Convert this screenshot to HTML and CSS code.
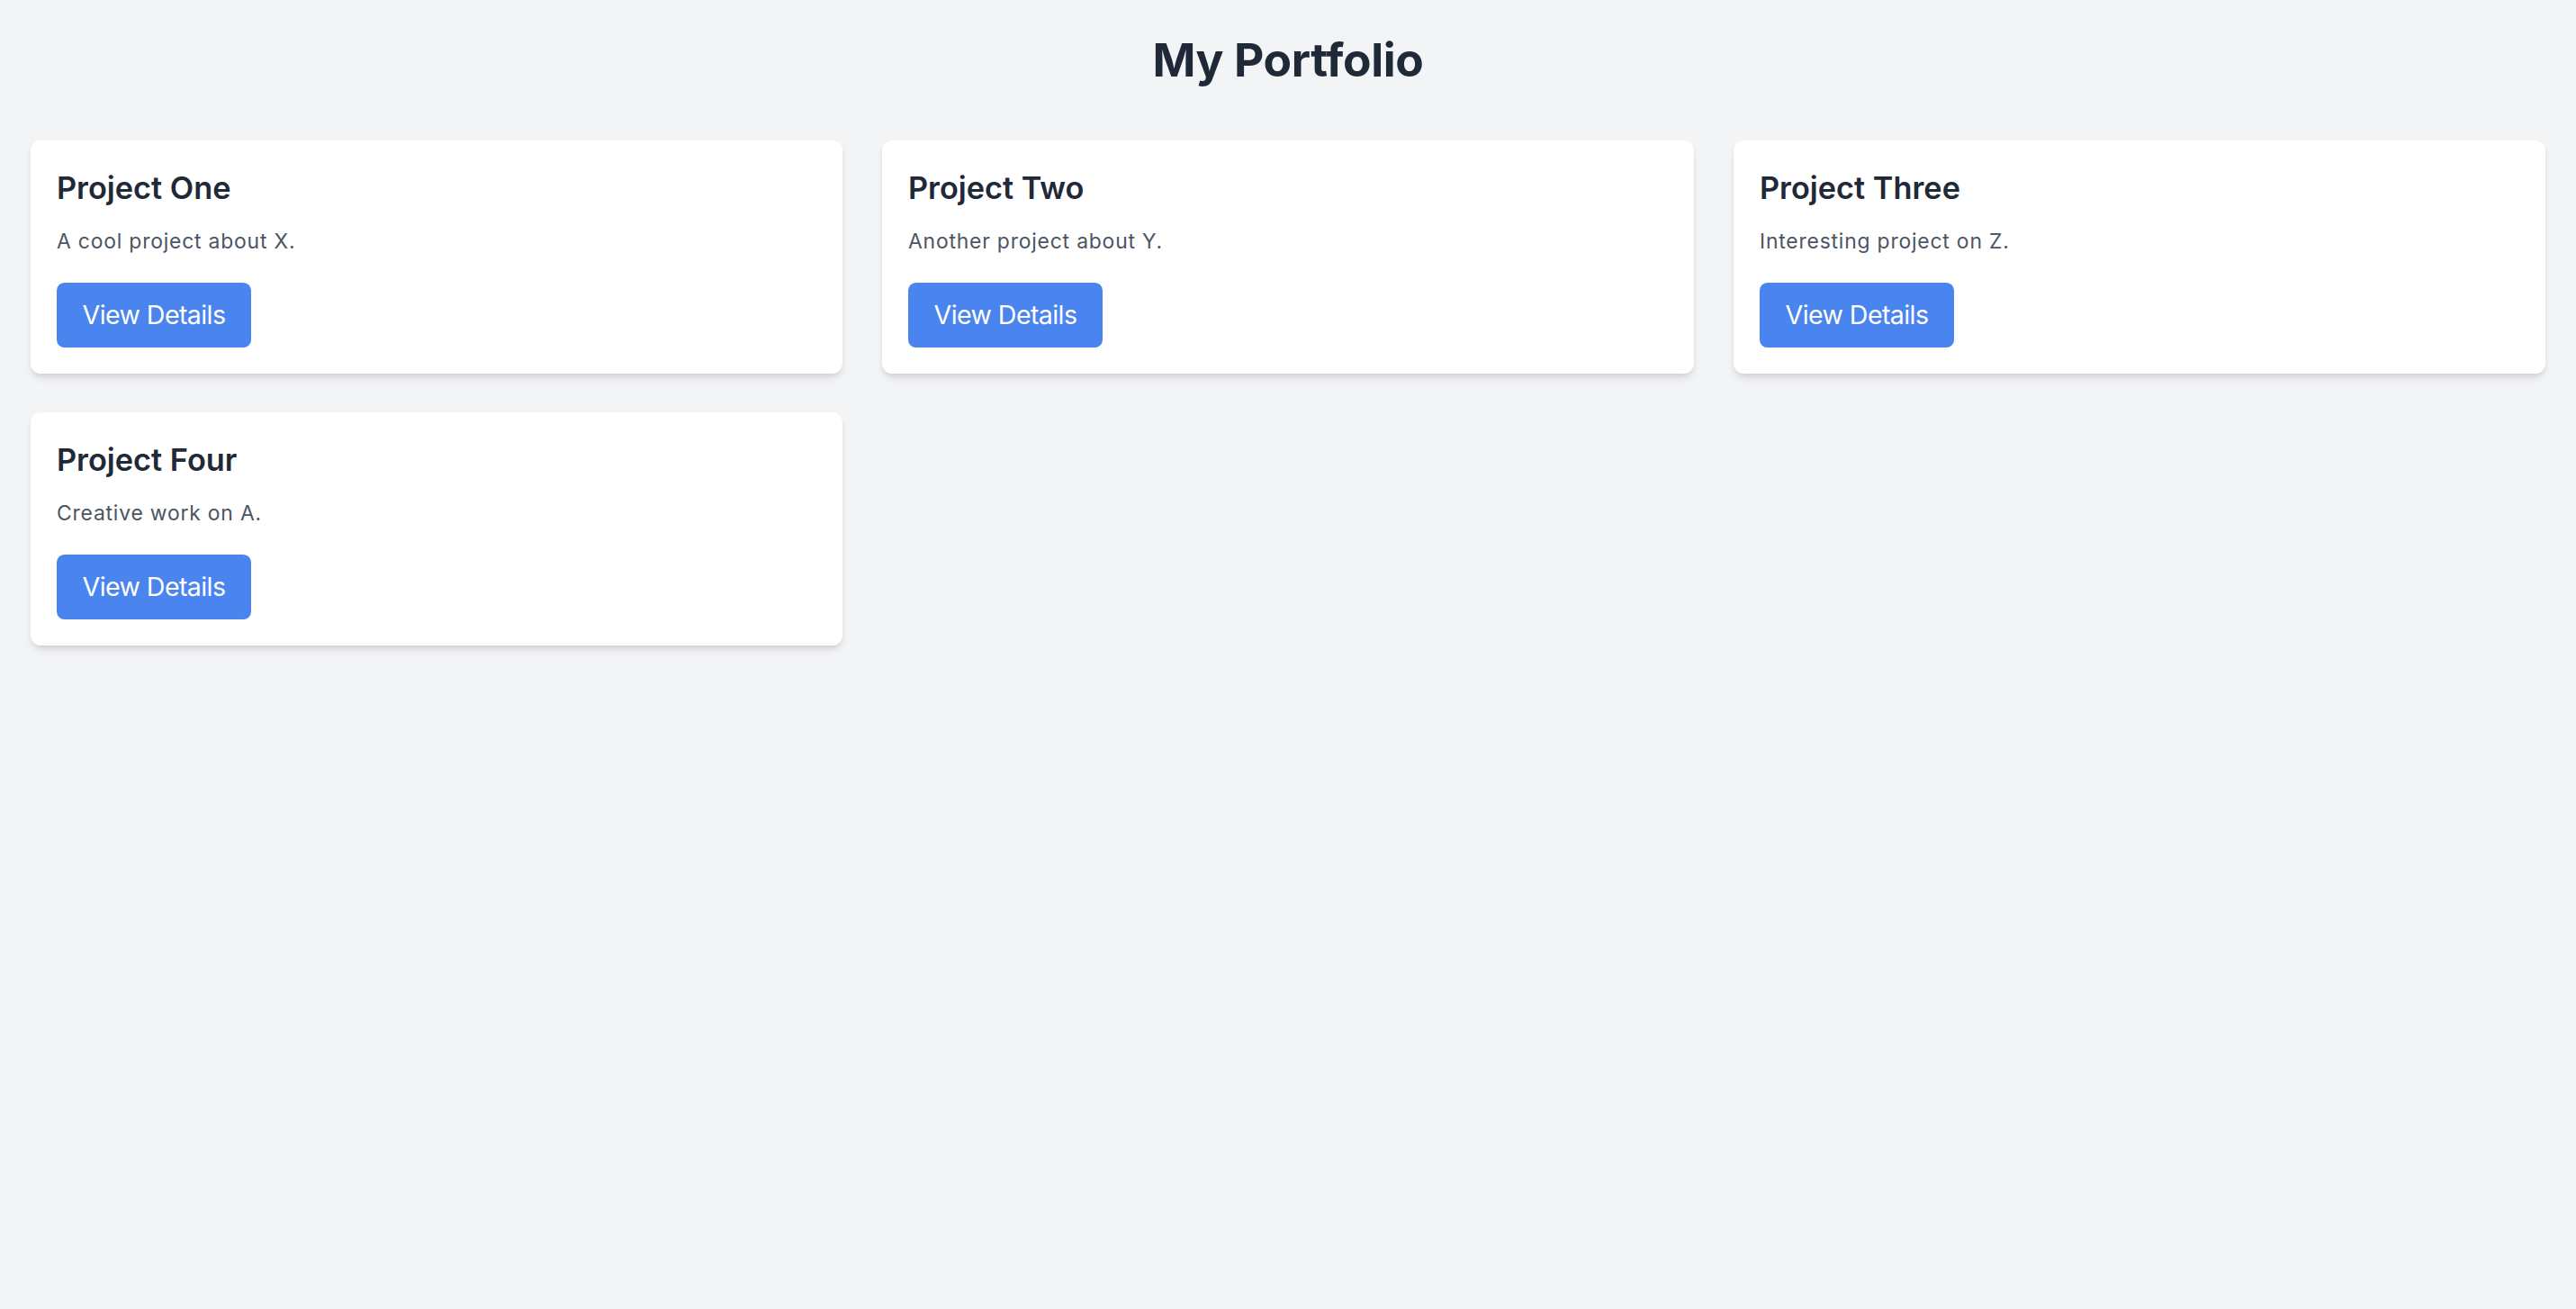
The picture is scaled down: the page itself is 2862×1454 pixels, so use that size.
FILE: index.html
```html
<!DOCTYPE html>
<html lang="en">
<head>
<meta charset="utf-8">
<title>My Portfolio</title>
<link rel="stylesheet" href="styles.css">
</head>
<body>
<main class="page">
  <h1 class="page-title">My Portfolio</h1>
  <section class="grid">
    <article class="card">
      <h2 class="card-title">Project One</h2>
      <p class="card-text">A cool project about X.</p>
      <button class="btn">View Details</button>
    </article>
    <article class="card">
      <h2 class="card-title">Project Two</h2>
      <p class="card-text">Another project about Y.</p>
      <button class="btn">View Details</button>
    </article>
    <article class="card">
      <h2 class="card-title">Project Three</h2>
      <p class="card-text">Interesting project on Z.</p>
      <button class="btn">View Details</button>
    </article>
    <article class="card">
      <h2 class="card-title">Project Four</h2>
      <p class="card-text">Creative work on A.</p>
      <button class="btn">View Details</button>
    </article>
  </section>
</main>
</body>
</html>
```
FILE: styles.css
```css
* { box-sizing: border-box; }
html, body {
  margin: 0;
  padding: 0;
  background: #f3f4f6;
}
body {
  font-family: Inter, "Noto Sans", "Liberation Sans", sans-serif;
  color: #1f2937;
}
.page {
  padding: 38px 34px 34px;
}
.page-title {
  margin: 0 0 61px;
  text-align: center;
  font-size: 51.5px;
  line-height: 57px;
  font-weight: 700;
  letter-spacing: -0.4px;
  color: #1f2937;
}
.grid {
  display: grid;
  grid-template-columns: repeat(3, 1fr);
  column-gap: 44px;
  row-gap: 43px;
}
.card {
  background: #ffffff;
  border-radius: 11.5px;
  padding: 30px 29px 29px;
  box-shadow: 0 6px 9px -1.5px rgba(0,0,0,0.1), 0 3px 6px -3px rgba(0,0,0,0.1);
}
.card-title {
  margin: 0 0 18.5px;
  font-size: 34.3px;
  line-height: 46px;
  font-weight: 600;
  color: #1f2937;
}
.card-text {
  margin: 0 0 29.5px;
  font-size: 22.9px;
  line-height: 34px;
  letter-spacing: 0.8px;
  color: #4b5563;
}
.btn {
  display: inline-block;
  border: 0;
  margin: 0;
  background: #4a84ee;
  color: #ffffff;
  font-family: inherit;
  font-size: 28.6px;
  line-height: 40px;
  letter-spacing: -0.6px;
  padding: 16px 28.6px;
  border-radius: 8.6px;
  cursor: pointer;
}
```
